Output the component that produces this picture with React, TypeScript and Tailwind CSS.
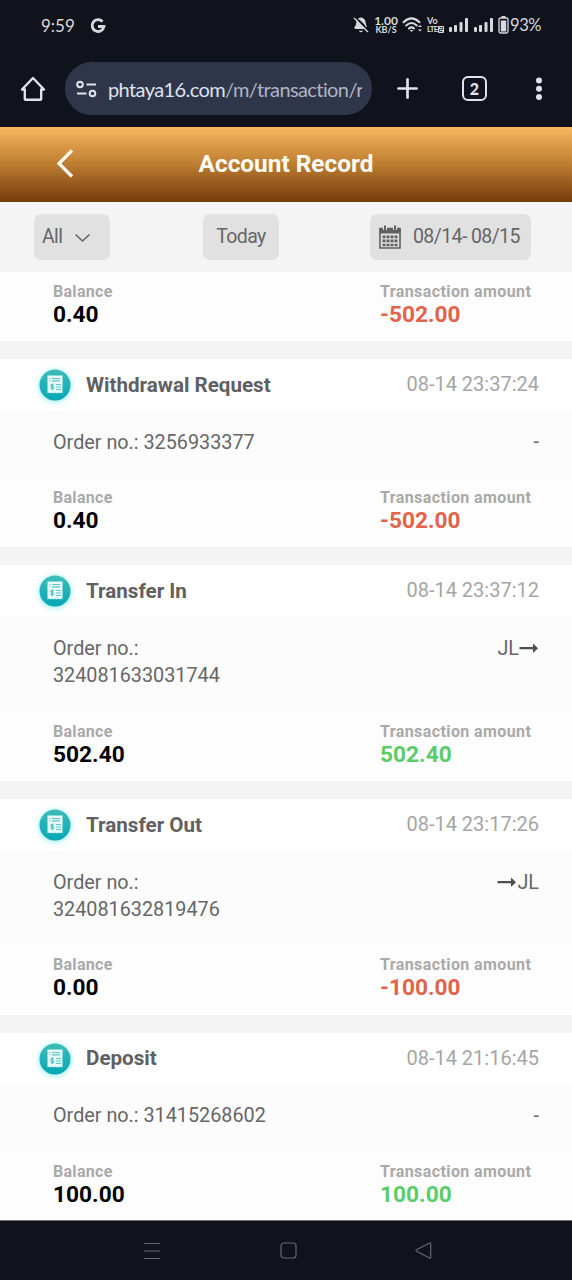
import { Plus, BellOff } from 'lucide-react'

interface TransactionRecord {
    title: string
    time: string
    order: string[]
    direction: 'in' | 'out' | 'none'
    balance: string
    amount: string
}

const records: TransactionRecord[] = [
    { title: 'Withdrawal Request', time: '08-14 23:37:24', order: ['Order no.: 3256933377'], direction: 'none', balance: '0.40', amount: '-502.00' },
    { title: 'Transfer In', time: '08-14 23:37:12', order: ['Order no.:', '324081633031744'], direction: 'in', balance: '502.40', amount: '502.40' },
    { title: 'Transfer Out', time: '08-14 23:17:26', order: ['Order no.:', '324081632819476'], direction: 'out', balance: '0.00', amount: '-100.00' },
    { title: 'Deposit', time: '08-14 21:16:45', order: ['Order no.: 31415268602'], direction: 'none', balance: '100.00', amount: '100.00' },
]

const SignalIcon = () => (
    <svg width="20" height="16" viewBox="0 0 20 16" fill="#d8d9dc">
        <rect x="0" y="10" width="3" height="5" rx="1" />
        <rect x="5" y="8" width="3" height="7" rx="1" />
        <rect x="10.500" y="5" width="3" height="10" rx="1" />
        <rect x="16" y="1" width="3" height="14" rx="1" />
    </svg>
)

const StatusBar = () => (
    <div className="flex h-[50px] items-center pl-[41px] pr-[30px] font-['Lato',sans-serif] text-[#d8d9dc]">
        <span className="w-[49px] text-[17px] leading-none">9:59</span>
        <svg className="mt-[2px]" width="16" height="16" viewBox="0 0 16 16" fill="none" stroke="#d8d9dc" strokeWidth="2.800">
            <path d="M12.500 3.700A5.900 5.900 0 1 0 13.900 8.500H8" />
        </svg>
        <div className="ml-auto flex items-center">
            <BellOff className="mr-[5px] h-[16px] w-[16px]" fill="#d8d9dc" strokeWidth={2} />
            <div className="mr-[4px] flex w-[24px] flex-col items-center">
                <span className="text-[12px] font-bold leading-[10px]">1.00</span>
                <span className="text-[9px] font-bold leading-[8px]">KB/S</span>
            </div>
            <svg width="20" height="18" viewBox="0 0 20 18" fill="none" stroke="#d8d9dc" strokeWidth="2" strokeLinecap="round">
                <path d="M1.500 6.200Q9.500-1.500 17.500 6.200M4.200 9.500Q9.500 4.500 14.800 9.500M7 12.500Q9.500 10.300 12 12.500" />
                <path d="M9.500 16l-1.800-2h3.600z" fill="#d8d9dc" stroke="none" />
                <path d="M16 11l2-2 2 2zM16 13.500l2 2 2-2z" fill="#d8d9dc" stroke="none" />
            </svg>
            <div className="ml-[5px] flex w-[22px] flex-col font-bold">
                <span className="text-[9px] leading-[8px]">Vo</span>
                <span className="flex items-center text-[8px] leading-[8px] tracking-[-0.8px]">
                    LTE
                    <svg className="ml-[1px]" width="6" height="7" viewBox="0 0 6 7" fill="none">
                        <rect width="6" height="7" rx="1" fill="#d8d9dc" />
                        <path d="M1.500 1.500h3v2h-3v2h3" stroke="#10131c" strokeWidth=".8" />
                    </svg>
                </span>
            </div>
            <SignalIcon />
            <span className="ml-[5px]"><SignalIcon /></span>
            <svg className="ml-[4px]" width="11" height="18" viewBox="0 0 11 18" fill="none">
                <rect x="3.500" y="0" width="4" height="2" fill="#d8d9dc" />
                <rect x="1" y="2" width="9" height="15" rx="1.500" stroke="#d8d9dc" strokeWidth="1.300" />
                <rect x="2.800" y="4.500" width="5.400" height="11" fill="#d8d9dc" />
            </svg>
            <span className="ml-[1px] w-[32px] whitespace-nowrap text-[16.500px] leading-none tracking-[-0.4px]">93%</span>
        </div>
    </div>
)

const BrowserBar = () => (
    <div className="flex h-[77px] items-start pl-[19px] pt-3">
        <svg className="mt-[13px]" width="28" height="28" viewBox="0 0 28 28" fill="none" stroke="#e0e2ee" strokeWidth="2.400" strokeLinejoin="round" strokeLinecap="round">
            <path d="M5.800 14.500H3L14 3l11 11.500h-2.800V24q0 .8-.8.800H6.600q-.8 0-.8-.8z" />
        </svg>
        <div className="ml-[18px] flex h-[53px] w-[307px] items-center rounded-full bg-[#30364a] pl-[11px]">
            <svg width="21" height="18" viewBox="0 0 21 18" fill="none" stroke="#e0e2ee" strokeWidth="2">
                <circle cx="4" cy="4.500" r="2.800" />
                <path d="M10.500 4.500H20M1 13.500h9.500" />
                <circle cx="16.500" cy="13.500" r="2.800" />
            </svg>
            <span className="ml-[11px] w-[254px] overflow-hidden whitespace-nowrap font-['Lato',sans-serif] text-[20px] leading-[26px] tracking-[-0.6px] text-[#dfe2ee]">
                phtaya16.com<span className="text-[#aeb3c4]">/m/transaction/r</span>
            </span>
        </div>
        <Plus className="ml-[20px] mt-[11px] h-[31px] w-[31px] text-[#e0e2ee]" strokeWidth={2.1} />
        <div className="ml-[39px] mt-[14px] flex h-[25px] w-[25px] items-center justify-center rounded-[6px] border-[2.500px] border-[#e0e2ee] font-['Lato',sans-serif] text-[16px] font-black leading-none text-[#e0e2ee]">
            2
        </div>
        <svg className="ml-[48px] mt-[15px]" width="8" height="24" viewBox="0 0 8 24" fill="#e0e2ee">
            <circle cx="4" cy="3.500" r="3" />
            <circle cx="4" cy="11.800" r="3" />
            <circle cx="4" cy="20" r="3" />
        </svg>
    </div>
)

const ReceiptIcon = () => (
    <svg className="overflow-visible drop-shadow-[0_1px_3px_rgba(20,215,225,0.5)]" width="32" height="32" viewBox="0 0 32 32" fill="none">
        <defs>
            <linearGradient id="badge" x1="0" y1="0" x2="0" y2="1">
                <stop stopColor="#3dbdb9" />
                <stop offset="1" stopColor="#05a7b4" />
            </linearGradient>
        </defs>
        <circle cx="16" cy="16" r="15.500" fill="url(#badge)" />
        <path d="M8.500 6.500h15v18l-1.500-1-1.500 1-1.500-1-1.500 1-1.500-1-1.500 1-1.500-1-1.500 1-1.500-1-1.500 1z" fill="#e8fbfb" />
        <path d="M13 9.500h8M13 11.800h8M17 15.500h5M17 18h5M17 20.500h5" stroke="#5cc3c6" strokeWidth="1.200" />
        <path d="M10.500 9.500h1M10.500 11.800h1" stroke="#5cc3c6" />
        <path d="M14.700 16c-.6-.7-3-.7-3 .6s3 .8 3 2.100-2.400 1.200-3.200.4M13.200 14.500v6.500" stroke="#34b3b8" />
    </svg>
)

const Arrow = () => (
    <svg width="20" height="12" viewBox="0 0 20 12" fill="#4d4d4d">
        <path d="M.500 5.100h13.500V1.500L19 6.200l-5 4.700V7.300H.500z" />
    </svg>
)

const AmountRow = ({ balance, amount }: { balance: string; amount: string }) => (
    <div className="flex pl-[53px] text-[16px] font-bold leading-[19px] text-[#a9a9a9]">
        <div className="w-[327px]">
            <div className="tracking-[0.3px]">Balance</div>
            <div className="mt-[1px] text-[22.700px] leading-[26px] text-black">{balance}</div>
        </div>
        <div>
            <div className="tracking-[0.4px]">Transaction amount</div>
            <div className={`mt-[1px] text-[22.700px] leading-[26px] ${amount.startsWith('-') ? 'text-[#e1634a]' : 'text-[#5bcb6b]'}`}>{amount}</div>
        </div>
    </div>
)

const RecordCard = ({ record }: { record: TransactionRecord }) => (
    <div className="mb-[18px] bg-[#fcfcfc]">
        <div className="flex h-[51px] items-center bg-white pl-[39px] pr-[33px] pt-[1px]">
            <ReceiptIcon />
            <span className="ml-[15px] text-[20.600px] font-bold text-[#606060]">{record.title}</span>
            <span className="relative -top-px ml-auto text-[20px] text-[#a5a5a5]">{record.time}</span>
        </div>
        <div className="flex justify-between pb-[18.700px] pl-[53px] pr-[33px] pt-[18.500px] text-[19.800px] leading-[27.250px] text-[#666]">
            <div>
                {record.order.map((line) => (
                    <div key={line}>{line}</div>
                ))}
            </div>
            <div className="flex h-[27px] items-center">
                {record.direction === 'out' && <Arrow />}
                {record.direction === 'none' ? '-' : 'JL'}
                {record.direction === 'in' && <Arrow />}
            </div>
        </div>
        <div className="h-[73px] border-t border-[#f9f9f9] bg-[#fdfdfd] pt-[12.500px]">
            <AmountRow balance={record.balance} amount={record.amount} />
        </div>
    </div>
)

const NavigationBar = () => (
    <div className="flex h-[60px] shrink-0 items-center border-t border-[#6c6f75] bg-[#10131c] pl-[143px]">
        <svg width="18" height="18" viewBox="0 0 18 18" stroke="#666871" strokeWidth="1.200">
            <path d="M1 1.500h16M1 9h16M1 16.500h16" />
        </svg>
        <svg className="ml-[119px]" width="17" height="17" viewBox="0 0 17 17" fill="none" stroke="#666871" strokeWidth="1.200">
            <rect x="1" y="1" width="15" height="15" rx="3" />
        </svg>
        <svg className="ml-[118px]" width="17" height="17" viewBox="0 0 17 17" fill="none" stroke="#666871" strokeWidth="1.200" strokeLinejoin="round">
            <path d="M1.500 7.700L14.500 1q1.200-.5 1.200 1v13q0 1.500-1.200 1L1.500 9.300q-1-.8 0-1.600z" />
        </svg>
    </div>
)

const App = () => {
    return (
        <div className="flex h-[1280px] w-[572px] flex-col overflow-hidden bg-[#f4f4f4] font-['Roboto',sans-serif]">
            <div className="shrink-0 bg-[#10131c]">
                <StatusBar />
                <BrowserBar />
            </div>

            {/* Page header */}
            <div className="grid h-[75px] shrink-0 grid-cols-[1fr_auto_1fr] items-center bg-linear-to-b from-[#f8b75e] via-[#bd7d31] to-[#743b0b]">
                <svg className="-mt-[3px] ml-[55px]" width="20" height="30" viewBox="0 0 20 30" fill="none" stroke="#fffdf5" strokeWidth="3.200">
                    <path d="M17 2.500L4 15.500l13 13" />
                </svg>
                <h1 className="text-[24.400px] font-bold leading-none text-[#fffdf5]">Account Record</h1>
            </div>

            {/* Filters */}
            <div className="flex h-[70px] shrink-0 items-start pl-[34px] pt-3 text-[19.500px] tracking-[-0.6px] text-[#666]">
                <div className="flex h-[46px] w-[76px] items-center rounded-[7px] bg-[#e1e1e1] pl-2">
                    All
                    <svg className="ml-[12px] mt-[2px]" width="17" height="10" viewBox="0 0 17 10" fill="none" stroke="#666" strokeWidth="1.600">
                        <path d="M1.500 1.500l7 6.500 7-6.500" />
                    </svg>
                </div>
                <div className="ml-[93px] flex h-[46px] w-[76px] items-center justify-center rounded-[7px] bg-[#e1e1e1]">Today</div>
                <div className="ml-[91px] flex h-[46px] w-[161px] items-center rounded-[7px] bg-[#e1e1e1] pl-[9px]">
                    <svg width="22" height="24" viewBox="0 0 22 24" fill="none">
                        <path d="M1 3.500h20V23H1z" stroke="#606060" strokeWidth="1.600" />
                        <path d="M.500 3h21v5.500H.500z" fill="#606060" />
                        <path d="M6 .500v4.500M16 .500v4.500" stroke="#e1e1e1" strokeWidth="4" />
                        <path d="M6 .500v4.500M16 .500v4.500" stroke="#606060" strokeWidth="2" />
                        <path d="M3.500 11.800h15M3.500 15.900h15M3.500 20h15" stroke="#606060" strokeWidth="2.700" strokeDasharray="3 1" />
                    </svg>
                    <span className="ml-[12px] whitespace-nowrap">08/14- 08/15</span>
                </div>
            </div>

            {/* Transaction list */}
            <div className="min-h-0 flex-1 overflow-hidden">
                <div className="mb-[18px] h-[69px] bg-[#fdfdfd] pt-[10px]">
                    <AmountRow balance="0.40" amount="-502.00" />
                </div>
                {records.map((record) => (
                    <RecordCard key={record.time} record={record} />
                ))}
            </div>

            <NavigationBar />
        </div>
    )
}

export default App
